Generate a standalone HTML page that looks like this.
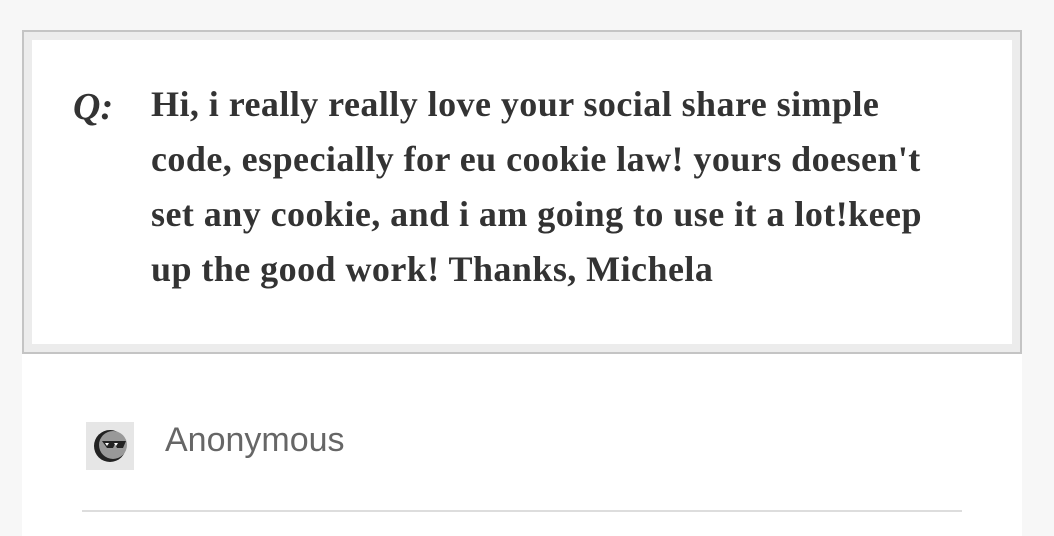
<!DOCTYPE html>
<html><head><style>
body{margin:0;width:1054px;height:536px;background:#f7f7f7;position:relative;overflow:hidden;font-family:"Liberation Serif",serif}
.box{position:absolute;left:22px;top:30px;width:996px;height:320px;border:2px solid #c4c4c4;background:#ececec}
.inner{position:absolute;left:8px;top:8px;right:8px;bottom:8px;background:#fff}
.q{position:absolute;left:41px;top:45px;font-size:38px;font-weight:bold;font-style:italic;color:#333}
.t{position:absolute;left:119px;top:37px;width:880px;white-space:nowrap;font-size:36px;font-weight:bold;color:#333;line-height:55px;letter-spacing:0.45px}
.white{position:absolute;left:22px;top:354px;width:1000px;height:182px;background:#fff}
.av{position:absolute;left:86px;top:422px;width:48px;height:48px;background:#e6e6e6}
.name{position:absolute;left:165px;top:421px;font-family:"Liberation Sans",sans-serif;font-size:34px;color:#666}
.hr{position:absolute;left:82px;top:510px;width:880px;height:2px;background:#ddd}
</style></head><body>
<div class="box"><div class="inner">
<div class="q">Q:</div>
<div class="t">Hi, i really really love your social share simple<br>code, especially for eu cookie law! yours doesen't<br>set any cookie, and i am going to use it a lot!keep<br>up the good work! Thanks, Michela</div>
</div></div>
<div class="white"></div>
<div class="av"><svg width="48" height="48"><circle cx="24" cy="24" r="16" fill="#222"/><circle cx="27" cy="23" r="14" fill="#999"/><path d="M16 19h24l-3 7h-6l-2-4-2 4h-6z" fill="#222"/><path d="M19 21h4l-2 3zM28 21h4l-2 3z" fill="#fff"/></svg></div>
<div class="name">Anonymous</div>
<div class="hr"></div>
</body></html>
